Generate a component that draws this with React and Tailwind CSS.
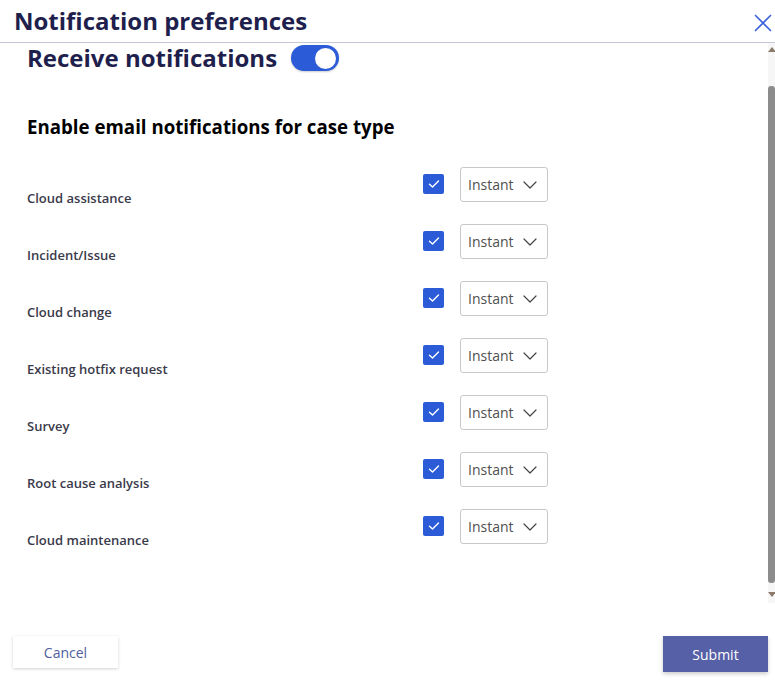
import React from "react";

const rows = [
  "Cloud assistance",
  "Incident/Issue",
  "Cloud change",
  "Existing hotfix request",
  "Survey",
  "Root cause analysis",
  "Cloud maintenance",
];

function Check() {
  return (
    <div className="mt-[7px] w-[21px] h-[20px] bg-[#2b5bd7] rounded-[2px] flex items-center justify-center">
      <svg width="12" height="10" viewBox="0 0 12 10" fill="none">
        <path d="M1.5 5.2 L4.5 8 L10.5 2" stroke="white" strokeWidth="1.4" strokeLinecap="round" strokeLinejoin="round" />
      </svg>
    </div>
  );
}

function Select() {
  return (
    <div className="ml-[16px] w-[88px] h-[35px] border border-[#c8c8c8] rounded-[3px] bg-white flex items-center pl-[7px] pr-[10px] justify-between">
      <span className="text-[14px] text-[#505050]">Instant</span>
      <svg width="14" height="8" viewBox="0 0 14 8" fill="none">
        <path d="M1 1 L7 7 L13 1" stroke="#444" strokeWidth="1.2" strokeLinecap="round" strokeLinejoin="round" />
      </svg>
    </div>
  );
}

export default function App() {
  return (
    <div className="w-[775px] h-[681px] bg-white flex flex-col overflow-hidden" style={{ fontFamily: '"Open Sans", "Noto Sans", sans-serif' }}>
      <div className="h-[43px] shrink-0 border-b border-[#c4c8d4] flex items-start justify-between pl-[14px] pr-[3px]">
        <h1 className="text-[24px] font-bold text-[#1f1f4d] leading-[33px] mt-[4px]">Notification preferences</h1>
        <svg className="mt-[14px]" width="18" height="18" viewBox="0 0 18 18" fill="none">
          <path d="M1 1 L17 17 M17 1 L1 17" stroke="#3b63dc" strokeWidth="1.6" />
        </svg>
      </div>
      <div className="h-[560px] shrink-0 flex">
        <div className="flex-1 pl-[27px]">
          <div className="flex items-center h-[32px] -mt-[1px]">
            <span className="text-[24px] font-bold text-[#1f1f4d] leading-[32px]">Receive notifications</span>
            <div className="ml-[14px] w-[48px] h-[26px] rounded-full bg-[#2b5bd7] flex items-center justify-end pr-[3px] shadow-[0_1px_2px_rgba(0,0,0,0.2)]">
              <div className="w-[21px] h-[21px] rounded-full bg-white" />
            </div>
          </div>
          <h2 className="mt-[40px] text-[18.7px] font-bold text-black leading-[25px]">Enable email notifications for case type</h2>
          <div className="mt-[28px] flex flex-col">
            {rows.map((r) => (
              <div key={r} className="h-[57px] flex items-start">
                <div className="w-[396px] mt-[22px] text-[13px] font-semibold text-[#3a3a4a] leading-[18px]">{r}</div>
                <Check />
                <Select />
              </div>
            ))}
          </div>
        </div>
        <div className="w-[7px] bg-[#f6f6f6] flex flex-col items-center">
          <div className="mt-[4px] w-0 h-0 border-l-[4px] border-r-[4px] border-b-[5px] border-l-transparent border-r-transparent border-b-[#8a7a6a]" />
          <div className="mt-[34px] w-[7px] h-[497px] bg-[#8c8c8c] rounded-[3px]" />
          <div className="mt-[9px] w-0 h-0 border-l-[4px] border-r-[4px] border-t-[5px] border-l-transparent border-r-transparent border-t-[#8a7a6a]" />
        </div>
      </div>
      <div className="flex-1 flex items-start justify-between pl-[13px] pr-[7px] pt-[33px]">
        <button className="w-[105px] h-[32px] bg-white shadow-[0_1px_3px_rgba(0,0,0,0.18)] text-[14px] text-[#4f5ea0]">Cancel</button>
        <button className="w-[105px] h-[36px] bg-[#5560a6] shadow-[0_2px_4px_rgba(0,0,0,0.2)] text-[14px] text-white">Submit</button>
      </div>
    </div>
  );
}
